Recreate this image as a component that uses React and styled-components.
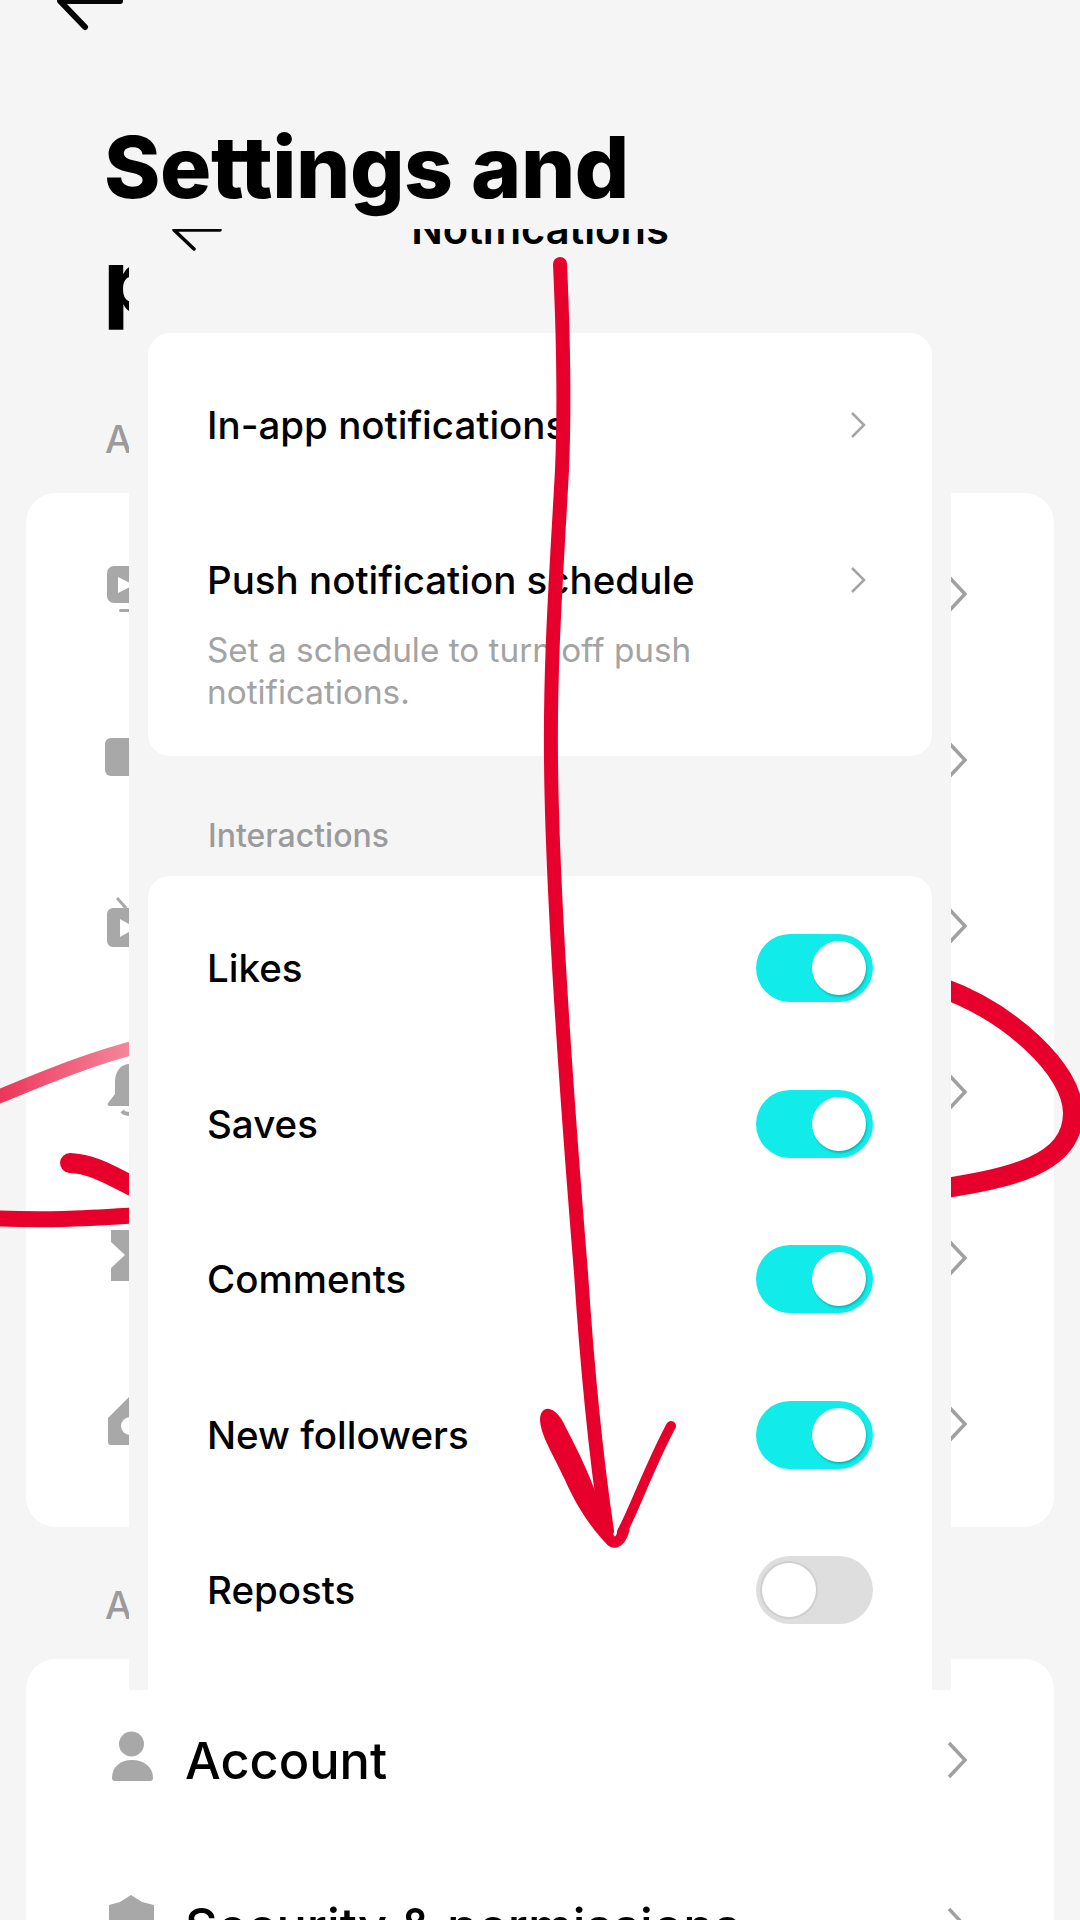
import React from 'react';
import styled, { createGlobalStyle } from 'styled-components';

const Global = createGlobalStyle`
  html, body { margin: 0; padding: 0; background: #f5f5f5; }
  body { font-family: 'Inter', 'Liberation Sans', sans-serif; color: #000; }
`;

const Page = styled.div`
  position: relative;
  width: 1080px;
  height: 1920px;
  overflow: hidden;
  background: #f5f5f5;
`;

const BackArrow = styled.svg`
  display: block;
  width: 70px;
  height: 60px;
  margin: -29px 0 0 56px;
`;

const Title = styled.h1`
  width: 640px;
  margin: 79px 0 0 104px;
  font-size: 85.5px;
  line-height: 114px;
  font-weight: 800;
  letter-spacing: -0.4px;
  color: #000;
`;

const Group = styled.div`
  margin: ${(p) => p.$top}px 0 29px 105px;
  font-size: 38px;
  line-height: 50px;
  font-weight: 500;
  color: #9b9b9b;
`;

const Card = styled.div`
  width: 1028px;
  margin-left: 26px;
  padding: 18px 0 20px;
  background: #fff;
  border-radius: 30px;
`;

const Row = styled.div`
  display: flex;
  align-items: center;
  height: 166px;
  padding: 0 86px 0 79px;
`;

const IconSlot = styled.svg`
  flex: none;
  width: 50px;
  height: 56px;
  overflow: visible;
  fill: #a8a8a8;
`;

const RowLabel = styled.span`
  flex: 1;
  margin-left: 30px;
  font-size: 50.5px;
  font-weight: 500;
  color: #000;
`;

const Push = styled.span`
  flex: 1;
`;

const Chevron = styled.svg`
  flex: none;
  width: ${(p) => (p.$small ? 16 : 21)}px;
  height: ${(p) => (p.$small ? 28 : 38)}px;
  fill: none;
  stroke: ${(p) => (p.$small ? '#a4a4a4' : '#a0a0a0')};
  stroke-width: ${(p) => (p.$small ? 2.5 : 3.5)}px;
`;

/* pen marks under the sub-screen */
const Scribble = styled.svg`
  position: absolute;
  inset: 0;
  width: 1080px;
  height: 1920px;
  fill: none;
  stroke: #e8002d;
  stroke-linecap: round;
  pointer-events: none;
  z-index: ${(p) => p.$z};
`;

const Sheet = styled.div`
  position: absolute;
  left: 129px;
  top: 229px;
  z-index: 2;
  width: 822px;
  height: 1461px;
  overflow: hidden;
  background: #f5f5f5;
`;

const SheetHead = styled.div`
  position: relative;
  height: 60px;
  margin-top: -30px;
  display: flex;
  align-items: center;
  justify-content: center;
  font-size: 41.6px;
  font-weight: 600;
  color: #000;
`;

const SheetBack = styled.svg`
  position: absolute;
  left: 42px;
  top: 0;
  width: 54px;
  height: 60px;
`;

const SheetCard = styled.div`
  width: 784px;
  margin: ${(p) => p.$top}px 0 0 19px;
  padding: ${(p) => p.$pad};
  background: #fff;
  border-radius: 22px;
`;

const ListRow = styled.div`
  display: flex;
  align-items: center;
  justify-content: space-between;
  height: 155.5px;
  padding: 0 ${(p) => p.$right}px 0 59px;
`;

const Name = styled.span`
  font-size: 38.5px;
  font-weight: 500;
  color: #000;
`;

const ScheduleHead = styled.div`
  display: flex;
  align-items: center;
  justify-content: space-between;
  height: 44px;
  margin-top: 55px;
  padding: 0 66px 0 59px;
`;

const Hint = styled.p`
  width: 560px;
  margin: 27px 0 0 59px;
  font-size: 33.3px;
  line-height: 42px;
  color: #a3a3a3;
`;

const Caption = styled.div`
  margin: 60px 0 0 79px;
  font-size: 32px;
  line-height: 40px;
  font-weight: 500;
  color: #9b9b9b;
`;

const Track = styled.div`
  display: flex;
  align-items: center;
  justify-content: ${(p) => (p.$on ? 'flex-end' : 'flex-start')};
  width: 117px;
  height: 68px;
  padding: 0 ${(p) => (p.$on ? 7 : 6)}px;
  box-sizing: border-box;
  border-radius: 34px;
  background: ${(p) => (p.$on ? '#11ecea' : '#dedede')};
`;

const Knob = styled.div`
  width: 54px;
  height: 54px;
  border-radius: 50%;
  background: #fff;
  box-shadow: ${(p) => (p.$on ? '1px 2px 2px rgba(0, 90, 90, 0.35)' : '0 0 0 2px #cfcfcf')};
`;

const ChevronIcon = ({ small }) => (
  <Chevron $small={small} viewBox={small ? '0 0 16 28' : '0 0 21 38'}>
    <path d={small ? 'M2 2 L14 14 L2 26' : 'M2 2 L18 19 L2 36'} />
  </Chevron>
);

const icons = [
  <>
    <rect x="2" y="0" width="46" height="37" rx="7" />
    <path d="M13 11 L13 27 L29 19 Z" fill="#fff" />
    <rect x="14" y="43" width="22" height="3" rx="1.5" />
  </>,
  <rect x="0" y="6" width="48" height="38" rx="6" />,
  <>
    <path d="M12 0 L21 10 M38 0 L29 10" stroke="#a8a8a8" strokeWidth="3" />
    <rect x="2" y="10" width="46" height="39" rx="6" />
    <path d="M15 21 L15 39 L31 30 Z" fill="#fff" />
  </>,
  <>
    <path d="M25 0 C15 0 10 8 10 18 L10 30 L3 39 C2 41 3 42 5 42 L45 42 C47 42 48 41 47 39 L40 30 L40 18 C40 8 35 0 25 0 Z" />
    <path d="M17 47 C20 51 30 51 33 47" stroke="#a8a8a8" strokeWidth="4" fill="none" />
  </>,
  <path d="M6 0 H44 V12 L30 25 L44 38 V51 H6 V38 L20 25 L6 12 Z" />,
  <>
    <path d="M24 1 L47 22 V46 C47 48 46 49 44 49 H6 C4 49 3 48 3 46 V22 Z" />
    <circle cx="25" cy="30" r="9" fill="#fff" />
  </>,
];

const PersonIcon = () => (
  <IconSlot viewBox="0 0 50 56">
    <circle cx="26.5" cy="12" r="12.5" />
    <path d="M7 46 C7 35 15 28 27 28 C39 28 48 35 48 46 C48 48 47 49 45 49 H10 C8 49 7 48 7 46 Z" />
  </IconSlot>
);

const ShieldIcon = () => (
  <IconSlot viewBox="0 0 50 56">
    <path d="M26 -3 L37 4 L49 7 V36 C49 46 36 54 26 58 C16 54 4 46 4 36 V7 L15 4 Z" />
  </IconSlot>
);

const toggles = [
  ['Likes', true],
  ['Saves', true],
  ['Comments', true],
  ['New followers', true],
  ['Reposts', false],
];

export default function App() {
  return (
    <Page>
      <Global />

      <BackArrow viewBox="0 0 70 60">
        <path d="M64 30 H4 L29 56" fill="none" stroke="#050505" strokeWidth="6" strokeLinecap="round" strokeLinejoin="round" />
      </BackArrow>
      <Title>Settings and privacy</Title>

      <Group $top={76}>Activity</Group>
      <Card>
        {icons.map((icon, i) => (
          <Row key={i}>
            <IconSlot viewBox="0 0 50 56">{icon}</IconSlot>
            <Push />
            <ChevronIcon />
          </Row>
        ))}
      </Card>

      <Group $top={53}>Account</Group>
      <Card>
        <Row>
          <PersonIcon />
          <RowLabel>Account</RowLabel>
          <ChevronIcon />
        </Row>
        <Row>
          <ShieldIcon />
          <RowLabel>Security &amp; permissions</RowLabel>
          <ChevronIcon />
        </Row>
      </Card>

      <Scribble $z={1} viewBox="0 0 1080 1920">
        <defs>
          <linearGradient id="fade" x1="0" y1="0" x2="1" y2="0">
            <stop offset="0" stopColor="#e8002d" stopOpacity="0.8" />
            <stop offset="1" stopColor="#e8002d" stopOpacity="0.45" />
          </linearGradient>
        </defs>
        <path d="M-10 1100 C40 1080 85 1060 140 1046" stroke="url(#fade)" strokeWidth="14" />
        <path d="M70 1163 C95 1164 115 1178 140 1190" strokeWidth="20" />
        <path d="M-10 1218 C50 1221 90 1218 140 1215" strokeWidth="16" />
        <path d="M940 987 C1010 1012 1073 1070 1073 1113 C1073 1165 1010 1178 940 1189" strokeWidth="20" />
      </Scribble>

      <Sheet>
        <SheetHead>
          <SheetBack viewBox="0 0 54 60">
            <path d="M49 31 H3 L23 50" fill="none" stroke="#050505" strokeWidth="3.5" strokeLinecap="round" strokeLinejoin="round" />
          </SheetBack>
          Notifications
        </SheetHead>

        <SheetCard $top={74} $pad="14px 0 43px">
          <ListRow $right={66}>
            <Name>In-app notifications</Name>
            <ChevronIcon small />
          </ListRow>
          <ScheduleHead>
            <Name>Push notification schedule</Name>
            <ChevronIcon small />
          </ScheduleHead>
          <Hint>Set a schedule to turn off push notifications.</Hint>
        </SheetCard>

        <Caption>Interactions</Caption>

        <SheetCard $top={20} $pad="15px 0 160px">
          {toggles.map(([name, on]) => (
            <ListRow key={name} $right={59}>
              <Name>{name}</Name>
              <Track $on={on}>
                <Knob $on={on} />
              </Track>
            </ListRow>
          ))}
        </SheetCard>
      </Sheet>

      <Scribble $z={3} viewBox="0 0 1080 1920">
        <path d="M560 264 C563 330 565 400 562 470 C556 580 550 660 551 760 C552 880 562 1040 581 1273 C588 1380 598 1470 607 1531" strokeWidth="14" />
        <path d="M540 1420 C540 1406 552 1404 562 1420 C580 1455 596 1485 606 1528 L608 1545 C596 1534 578 1510 565 1480 C552 1452 541 1436 540 1420 Z" fill="#e8002d" stroke="none" />
        <path d="M608 1536 C612 1546 620 1544 624 1530" strokeWidth="11" />
        <path d="M622 1532 C634 1510 650 1465 671 1426" strokeWidth="10" />
      </Scribble>
    </Page>
  );
}
